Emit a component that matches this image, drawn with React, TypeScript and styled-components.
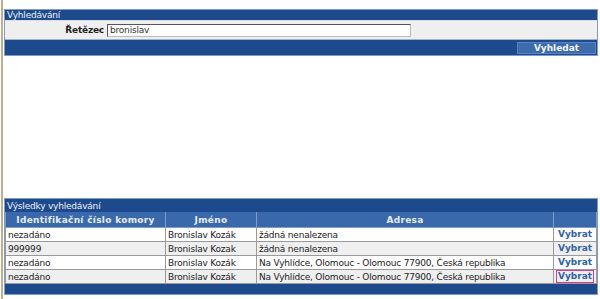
import React from "react";
import styled, { createGlobalStyle } from "styled-components";

const GlobalStyle = createGlobalStyle`
  html, body {
    margin: 0;
    padding: 0;
    background: #ffffff;
  }
  body {
    font-family: "DejaVu Sans", Verdana, sans-serif;
    font-size: 9px;
    letter-spacing: -0.2px;
    color: #222;
  }
`;

const Page = styled.div`
  width: 600px;
  height: 299px;
  box-sizing: border-box;
  border-left: 2px solid #c4ad8c;
  margin-left: 1px;
  padding: 9px 3px 0 1px;
  display: flex;
  flex-direction: column;
`;

const Panel = styled.div`
  border: 1px solid #7f9cc4;
`;

const PanelTitle = styled.div<{ tall?: boolean }>`
  background: #1d4a8c;
  color: #eef2f9;
  height: ${(p) => (p.tall ? 13 : 10)}px;
  line-height: ${(p) => (p.tall ? 14 : 10)}px;
  padding-left: 2px;
`;

const FormRow = styled.div`
  background: #efefef;
  height: 18px;
  display: flex;
  align-items: center;
  border-top: 1px solid #d8dde6;
  border-bottom: 1px solid #9fb3cf;
`;

const Label = styled.label`
  width: 99px;
  text-align: right;
  font-weight: bold;
  color: #222;
  padding-right: 3px;
`;

const Input = styled.input`
  width: 304px;
  height: 13px;
  box-sizing: border-box;
  border: 1px solid #555;
  border-right-color: #bbb;
  border-bottom-color: #bbb;
  font-family: "DejaVu Sans", Verdana, sans-serif;
  font-size: 9px;
  letter-spacing: -0.2px;
  padding: 0 2px;
  color: #333;
  outline: none;
`;

const ActionBar = styled.div`
  background: #1d4a8c;
  height: 15px;
  display: flex;
  justify-content: flex-end;
  align-items: center;
  padding-right: 1px;
`;

const Button = styled.button`
  width: 79px;
  height: 12px;
  background: #3d6cae;
  border: 1px solid #5a84bf;
  color: #f4f6fa;
  font-family: "DejaVu Sans", Verdana, sans-serif;
  font-size: 9px;
  font-weight: bold;
  padding: 0;
  line-height: 10px;
`;

const Spacer = styled.div`
  flex: 0 0 142px;
`;

const Table = styled.table`
  width: 100%;
  border-collapse: collapse;
  table-layout: fixed;
`;

const Th = styled.th<{ w?: number }>`
  width: ${(p) => (p.w ? `${p.w}px` : "auto")};
  background: #3a69ab;
  color: #e4ecf8;
  font-weight: bold;
  height: 15px;
  padding: 0;
  border: 1px solid #7f9cc4;
  border-top: none;
  letter-spacing: 0.3px;
`;

const Tr = styled.tr<{ shaded?: boolean }>`
  background: ${(p) => (p.shaded ? "#efefef" : "#ffffff")};
`;

const Td = styled.td`
  height: 13px;
  padding: 0 0 0 2px;
  border: 1px solid #9a9a9a;
  white-space: nowrap;
  overflow: hidden;
  color: #222;
`;

const LinkCell = styled.td`
  height: 13px;
  padding: 0;
  border: 1px solid #9a9a9a;
  text-align: center;
`;

const Link = styled.a<{ focused?: boolean }>`
  display: inline-block;
  color: #2f62a8;
  font-weight: bold;
  text-decoration: none;
  padding: 0 1px;
  line-height: 11px;
  letter-spacing: 0;
  border: 1px solid ${(p) => (p.focused ? "#d83c8c" : "transparent")};
`;

const TableFooter = styled.div`
  background: #1d4a8c;
  height: 10px;
`;

const rows = [
  { id: "nezadáno", name: "Bronislav Kozák", addr: "žádná nenalezena" },
  { id: "999999", name: "Bronislav Kozak", addr: "žádná nenalezena" },
  {
    id: "nezadáno",
    name: "Bronislav Kozák",
    addr: "Na Vyhlídce, Olomouc - Olomouc 77900, Česká republika",
  },
  {
    id: "nezadáno",
    name: "Bronislav Kozák",
    addr: "Na Vyhlídce, Olomouc - Olomouc 77900, Česká republika",
  },
];

const App: React.FC = () => {
  return (
    <>
      <GlobalStyle />
      <Page>
        <Panel>
          <PanelTitle>Vyhledávání</PanelTitle>
          <FormRow>
            <Label>Řetězec</Label>
            <Input defaultValue="bronislav" />
          </FormRow>
          <ActionBar>
            <Button>Vyhledat</Button>
          </ActionBar>
        </Panel>
        <Spacer />
        <Panel>
          <PanelTitle tall>Výsledky vyhledávání</PanelTitle>
          <Table>
            <thead>
              <tr>
                <Th w={159}>Identifikační číslo komory</Th>
                <Th w={90}>Jméno</Th>
                <Th>Adresa</Th>
                <Th w={42}></Th>
              </tr>
            </thead>
            <tbody>
              {rows.map((r, i) => (
                <Tr key={i} shaded={i % 2 === 1}>
                  <Td>{r.id}</Td>
                  <Td>{r.name}</Td>
                  <Td>{r.addr}</Td>
                  <LinkCell>
                    <Link href="#" focused={i === rows.length - 1}>
                      Vybrat
                    </Link>
                  </LinkCell>
                </Tr>
              ))}
            </tbody>
          </Table>
          <TableFooter />
        </Panel>
      </Page>
    </>
  );
};

export default App;
